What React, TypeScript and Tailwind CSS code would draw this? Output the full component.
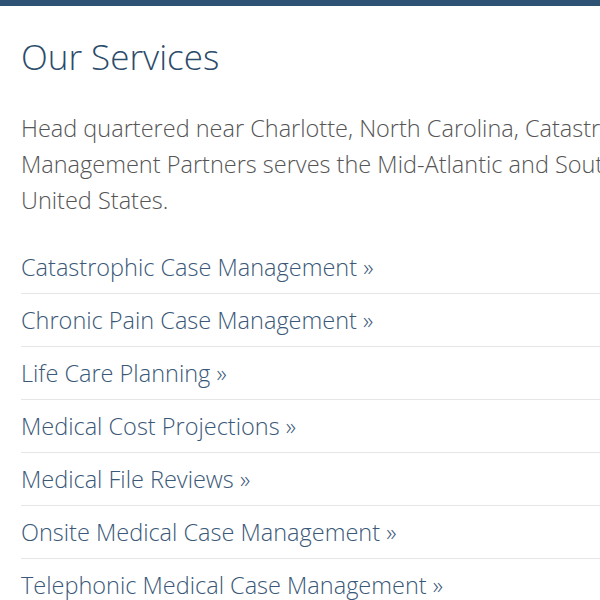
const services = [
  "Catastrophic Case Management",
  "Chronic Pain Case Management",
  "Life Care Planning",
  "Medical Cost Projections",
  "Medical File Reviews",
  "Onsite Medical Case Management",
  "Telephonic Medical Case Management",
];

export default function App() {
  return (
    <div className="h-[600px] w-[600px] overflow-hidden bg-white font-['Open_Sans',sans-serif] font-light">
      <div className="h-[6px] bg-[#2d5273]" />
      <div className="w-[860px] pl-[21px]">
        <h1 className="mt-[30px] text-[35px] leading-[41px] text-[#2b4b6a]">Our Services</h1>
        <p className="mt-[33px] text-[23.5px] leading-[36px] text-[#555]">
          Head quartered near Charlotte, North Carolina, Catastrophic Case
          <br />
          Management Partners serves the Mid-Atlantic and Southeastern
          <br />
          United States.
        </p>
        <ul className="mt-[23px]">
          {services.map((name, i) => (
            <li
              key={name}
              className={`py-[10px] ${i < services.length - 1 ? "border-b border-[#e6e6e6]" : ""}`}
            >
              <a href="#" className="text-[23.5px] leading-[32px] text-[#3a5878]">
                {name} &raquo;
              </a>
            </li>
          ))}
        </ul>
      </div>
    </div>
  );
}
